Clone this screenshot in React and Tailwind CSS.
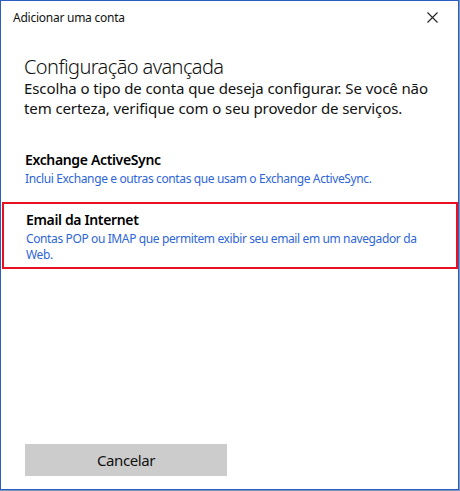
import React from "react";

export default function App() {
  const font = { fontFamily: '"Noto Sans", "Open Sans", sans-serif' };
  return (
    <div className="w-[460px] h-[491px] bg-[#7d96bd]" style={font}>
      <div className="w-[459px] h-[490px] bg-white border border-[#2a5ec3] flex flex-col">
        <div className="h-[33px] flex items-center justify-between pl-[12px] pr-[20px]">
          <span className="text-[12px] text-[#111] leading-[16px] tracking-[-0.25px]">Adicionar uma conta</span>
          <svg width="11" height="11" viewBox="0 0 11 11" className="block">
            <path d="M0.5 0.5 L10.5 10.5 M10.5 0.5 L0.5 10.5" stroke="#222" strokeWidth="1.1" fill="none" />
          </svg>
        </div>
        <div className="px-[23px] pt-[22px]">
          <h1 className="text-[20px] leading-[22px] text-[#111] font-light tracking-[-0.6px]">Configuração avançada</h1>
          <p className="text-[15px] leading-[20px] text-[#111] tracking-[-0.1px]">
            Escolha o tipo de conta que deseja configurar. Se você não tem certeza, verifique com o seu provedor de serviços.
          </p>
        </div>
        <div className="px-[24px] pt-[32px] pb-[15px]">
          <div className="text-[14px] leading-[20px] font-semibold text-black tracking-[-0.35px]">Exchange ActiveSync</div>
          <div className="text-[12px] leading-[16px] text-[#2f66d8] mt-[1px] tracking-[-0.38px]">
            Inclui Exchange e outras contas que usam o Exchange ActiveSync.
          </div>
        </div>
        <div className="ml-[1px] border-2 border-[#e81123] pl-[22px] pr-[30px] pt-[6px] pb-[4px]">
          <div className="text-[14px] leading-[20px] font-semibold text-black tracking-[-0.35px]">Email da Internet</div>
          <div className="text-[12px] leading-[16px] text-[#2f66d8] mt-[1px] tracking-[-0.38px]">
            Contas POP ou IMAP que permitem exibir seu email em um navegador da Web.
          </div>
        </div>
        <div className="mt-auto px-[24px] pb-[13px]">
          <button className="w-[202px] h-[32px] bg-[#cccccc] text-[15px] text-[#111] tracking-[-0.4px] flex items-center justify-center">
            Cancelar
          </button>
        </div>
      </div>
    </div>
  );
}
